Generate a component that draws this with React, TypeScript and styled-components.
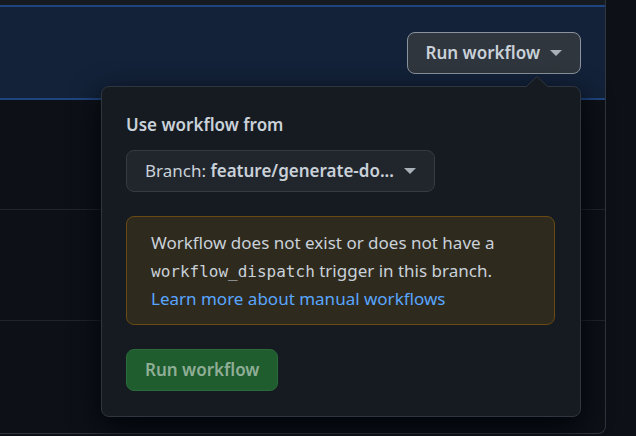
import React from 'react';
import styled, { createGlobalStyle } from 'styled-components';

const GlobalStyle = createGlobalStyle`
  *, *::before, *::after { box-sizing: border-box; }
  body {
    margin: 0;
    overflow-x: hidden;
    background: #0d1117;
    color: #c9d1d9;
    font: 17px/28px "Noto Sans", sans-serif;
  }
`;

const List = styled.main`
  margin-right: 30px;
  border: solid #30363d;
  border-width: 0 1px 1px 0;
  border-radius: 0 0 8px 0;
`;

const ListHeader = styled.div`
  height: 5px;
  background: #161b22;
`;

const Banner = styled.section`
  display: flex;
  justify-content: flex-end;
  padding: 25px 24px 24px;
  border: solid #1f4580;
  border-width: 2px 0;
  background: #132239;
`;

const Row = styled.div<{ $height: number }>`
  height: ${({ $height }) => $height}px;

  & + & {
    border-top: 1px solid #21262d;
  }
`;

const Dropdown = styled.div`
  position: relative;
`;

const Button = styled.button<{ $kind: 'active' | 'plain' | 'primary' }>`
  display: flex;
  align-items: center;
  gap: 10px;
  height: 42px;
  padding: 0 18px;
  border: 1px solid
    ${({ $kind }) => ({ active: '#8b949e', plain: '#363b42', primary: '#2b6a3b' })[$kind]};
  border-radius: 8px;
  background: ${({ $kind }) => ({ active: '#30363d', plain: '#21262d', primary: '#1f5c2e' })[$kind]};
  color: ${({ $kind }) => ($kind === 'primary' ? '#8fae96' : '#c9d1d9')};
  font: inherit;
  font-weight: ${({ $kind }) => ($kind === 'plain' ? 400 : 600)};
  white-space: nowrap;

  b {
    font-weight: 600;
  }
`;

const Caret = styled.span`
  border: solid transparent;
  border-width: 6px 6px 0;
  border-top-color: #a9b0b8;
`;

const Menu = styled.div`
  position: absolute;
  top: calc(100% + 12px);
  right: 0;
  width: 480px;
  max-width: calc(100vw - 56px);
  display: flex;
  flex-direction: column;
  align-items: flex-start;
  gap: 24px;
  padding: 24px 25px 25px 24px;
  border: 1px solid #30363d;
  border-radius: 8px;
  background: #161b22;
  box-shadow: 0 10px 30px #010409;
`;

const Pointer = styled.svg`
  position: absolute;
  top: -11px;
  right: 32px;
  width: 22px;
  height: 11px;
`;

const Field = styled.div`
  display: flex;
  flex-direction: column;
  align-items: flex-start;
  gap: 12px;
`;

const Title = styled.label`
  font-weight: 600;
  line-height: 27px;
`;

const Notice = styled.div`
  align-self: stretch;
  padding: 12px 24px 11px;
  border: 1px solid #684a12;
  border-radius: 8px;
  background: #2f2a1e;

  code {
    font: 16px/1 "DejaVu Sans Mono", monospace;
  }
`;

const Link = styled.a`
  display: block;
  width: fit-content;
  color: #58a6ff;
  text-decoration: none;
`;

export default function App() {
  return (
    <>
      <GlobalStyle />
      <List>
        <ListHeader />
        <Banner>
          <Dropdown>
            <Button type="button" $kind="active" aria-expanded="true">
              Run workflow
              <Caret />
            </Button>
            <Menu>
              <Pointer viewBox="0 0 22 11" aria-hidden="true">
                <path d="M0 11L11 0.5L22 11Z" fill="#161b22" />
                <path d="M0.5 10.5L11 0.5L21.5 10.5" fill="none" stroke="#30363d" />
              </Pointer>
              <Field>
                <Title htmlFor="branch">Use workflow from</Title>
                <Button type="button" id="branch" $kind="plain">
                  <span>
                    Branch: <b>feature/generate-do...</b>
                  </span>
                  <Caret />
                </Button>
              </Field>
              <Notice>
                Workflow does not exist or does not have a <code>workflow_dispatch</code> trigger in
                this branch.
                <Link href="#manual-workflows">Learn more about manual workflows</Link>
              </Notice>
              <Button type="button" $kind="primary" disabled>
                Run workflow
              </Button>
            </Menu>
          </Dropdown>
        </Banner>
        <Row $height={109} />
        <Row $height={111} />
        <Row $height={113} />
      </List>
    </>
  );
}
